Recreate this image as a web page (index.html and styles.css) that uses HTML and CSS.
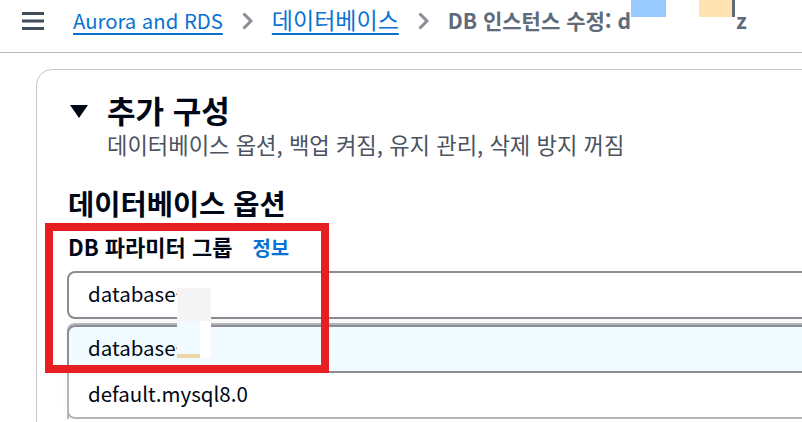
FILE: index.html
```html
<!DOCTYPE html>
<html lang="ko">
<head>
<meta charset="utf-8">
<title>DB 인스턴스 수정</title>
<link rel="stylesheet" href="styles.css">
</head>
<body>
<header class="topbar">
  <svg class="menu" width="22" height="18" viewBox="0 0 22 18" aria-hidden="true">
    <rect x="0" y="0" width="22" height="3" fill="#414d5c"/>
    <rect x="0" y="7.5" width="22" height="3" fill="#414d5c"/>
    <rect x="0" y="15" width="22" height="3" fill="#414d5c"/>
  </svg>
  <nav class="crumbs">
    <a class="crumb-link crumb-en" href="#">Aurora and RDS</a>
    <svg class="chev" width="11" height="18" viewBox="0 0 11 18" aria-hidden="true"><polyline points="1.5,1.5 9,9 1.5,16.5" fill="none" stroke="#8c8c94" stroke-width="3"/></svg>
    <a class="crumb-link crumb-ko" href="#">데이터베이스</a>
    <svg class="chev" width="11" height="18" viewBox="0 0 11 18" aria-hidden="true"><polyline points="1.5,1.5 9,9 1.5,16.5" fill="none" stroke="#8c8c94" stroke-width="3"/></svg>
    <span class="crumb-current">DB 인스턴스 수정: d<span class="redact-head"><span class="rh-white"></span><span class="rh-blue"></span><span class="rh-peach"></span><span class="rh-bar"></span></span>z</span>
  </nav>
</header>
<main class="page">
  <section class="card">
    <div class="exp-head">
      <span class="caret"></span>
      <div>
        <h2 class="exp-title">추가 구성</h2>
        <p class="exp-desc">데이터베이스 옵션, 백업 켜짐, 유지 관리, 삭제 방지 꺼짐</p>
      </div>
    </div>
    <h3 class="sub-title">데이터베이스 옵션</h3>
    <div class="field">
      <div class="field-label"><span>DB 파라미터 그룹</span><a class="info" href="#">정보</a></div>
      <div class="select">database-</div>
      <ul class="dropdown">
        <li class="opt opt-hl">database-</li>
        <li class="opt opt-last">default.mysql8.0</li>
      </ul>
      <span class="rd-gray"></span>
      <span class="rd-blue"></span>
      <span class="rd-white"></span>
      <span class="rd-peach"></span>
      <span class="redbox"></span>
    </div>
  </section>
</main>
</body>
</html>
```
FILE: styles.css
```css
html, body {
  margin: 0;
  padding: 0;
  background: #ffffff;
  overflow: hidden;
  width: 802px;
  height: 422px;
}
body {
  font-family: "Noto Sans CJK KR", "Noto Sans", sans-serif;
  color: #000716;
}
.topbar {
  position: relative;
  height: 52px;
  border-bottom: 1px solid #b6b6bd;
  display: flex;
  align-items: flex-start;
  padding: 0 0 0 22px;
  box-sizing: content-box;
}
.menu {
  margin-top: 12px;
  margin-right: 29px;
  flex: none;
}
.crumbs {
  display: flex;
  align-items: baseline;
  padding-top: 4px;
  font-size: 21px;
  line-height: 30px;
  white-space: nowrap;
}
.crumb-link {
  color: #0972d3;
  text-decoration: underline;
  text-decoration-thickness: 2px;
  text-underline-offset: 4px;
}
.crumb-en {
  font-size: 20.3px;
}
.crumb-ko {
  font-size: 23px;
}
.chev {
  margin: 0 19px;
  flex: none;
  align-self: flex-start;
  margin-top: 8px;
}
.crumb-current {
  color: #5f6b7a;
  font-weight: 700;
  position: relative;
}
.redact-head {
  display: inline-block;
  position: relative;
  width: 105px;
  height: 10px;
}
.rh-white {
  position: absolute;
  left: 0;
  top: -20px;
  width: 105px;
  height: 51px;
  background: #ffffff;
}
.rh-blue {
  position: absolute;
  left: 0;
  top: -19px;
  width: 35px;
  height: 17px;
  background: #99caff;
}
.rh-peach {
  position: absolute;
  left: 68px;
  top: -19px;
  width: 33px;
  height: 17px;
  background: #ffe3b3;
}
.rh-bar {
  position: absolute;
  left: 101px;
  top: -19px;
  width: 3px;
  height: 17px;
  background: #5f6b7a;
}
.page {
  padding: 16px 0 0 36px;
}
.card {
  position: relative;
  width: 1000px;
  height: 400px;
  border: 1px solid #c6c6cd;
  border-radius: 16px 0 0 0;
  padding: 22px 0 0 31px;
  box-sizing: border-box;
}
.exp-head {
  display: flex;
  align-items: flex-start;
}
.caret {
  width: 0;
  height: 0;
  border-left: 9px solid transparent;
  border-right: 9px solid transparent;
  border-top: 13px solid #000716;
  margin: 13px 19px 0 2px;
  flex: none;
}
.exp-title {
  margin: 0;
  font-size: 31px;
  line-height: 36px;
  font-weight: 700;
}
.exp-desc {
  margin: 2px 0 0 0;
  font-size: 22.2px;
  line-height: 28px;
  color: #4b5361;
}
.sub-title {
  margin: 28px 0 0 0;
  font-size: 28.5px;
  line-height: 34px;
  font-weight: 700;
}
.field {
  position: relative;
  margin-top: 12px;
}
.field-label {
  font-size: 22px;
  line-height: 28px;
  font-weight: 700;
  display: flex;
  align-items: baseline;
  gap: 20px;
}
.info {
  color: #0972d3;
  font-size: 20px;
  text-decoration: none;
}
.select {
  margin: 9px 0 0 -1px;
  height: 48px;
  box-sizing: border-box;
  border: 2px solid #8c8c94;
  border-radius: 8px;
  padding: 0 0 4px 19px;
  font-size: 20.5px;
  line-height: 40px;
}
.dropdown {
  list-style: none;
  margin: 4px 0 0 -1px;
  padding: 0;
  border: 2px solid #b4b4bb;
  border-bottom: none;
  border-radius: 8px 8px 0 0;
  box-shadow: 0 -4px 8px rgba(0, 7, 22, 0.04);
}
.opt {
  height: 48px;
  box-sizing: border-box;
  margin: 0 -2px;
  padding: 0 0 4px 19px;
  font-size: 20.5px;
  line-height: 40px;
  border: 2px solid transparent;
}
.opt-hl {
  background: #f0fbff;
  border-color: #8c8c94;
  border-radius: 8px;
}
.opt-last {
  height: 46px;
  border-top: none;
  border-color: #b4b4bb;
  border-radius: 0 0 8px 8px;
}
.rd-gray {
  position: absolute;
  left: 109px;
  top: 56px;
  width: 34px;
  height: 33px;
  background: #f4f4f4;
}
.rd-blue {
  position: absolute;
  left: 109px;
  top: 89px;
  width: 23px;
  height: 33px;
  background: #f0fbff;
}
.rd-white {
  position: absolute;
  left: 132px;
  top: 89px;
  width: 11px;
  height: 37px;
  background: #ffffff;
}
.rd-peach {
  position: absolute;
  left: 109px;
  top: 122px;
  width: 23px;
  height: 4px;
  background: #efd4a8;
}
.redbox {
  position: absolute;
  left: -23px;
  top: -9px;
  width: 284px;
  height: 150px;
  box-sizing: border-box;
  border: 8px solid #e51f22;
}
```
